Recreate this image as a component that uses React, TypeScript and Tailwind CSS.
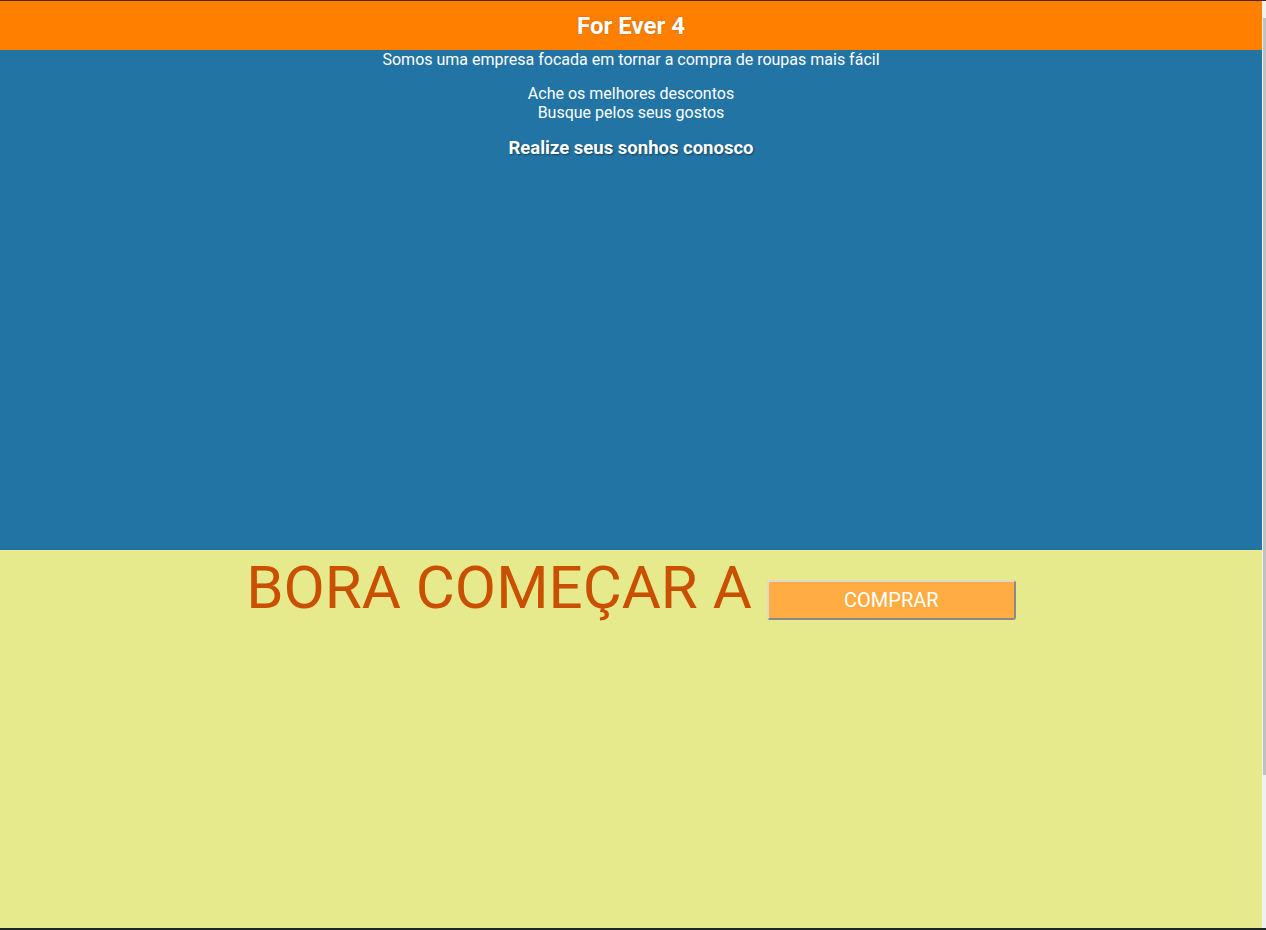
export default function App() {
  return (
    <div className="h-[930px] flex flex-col overflow-hidden font-['Roboto',sans-serif]">
      <div className="h-px bg-[#4a2500]" />
      <div className="flex flex-1 min-h-0">
        <main className="flex-1 flex flex-col">
          <header className="h-[49px] bg-[#ff8000] flex items-center justify-center">
            <h1 className="text-[24px] font-bold text-white [text-shadow:0_0_2px_rgba(0,0,0,0.25)]">
              For Ever 4
            </h1>
          </header>

          <section className="h-[500px] bg-[#2274a5] text-white text-center text-[16px]">
            <p className="leading-[19px]">
              Somos uma empresa focada em tornar a compra de roupas mais fácil
            </p>
            <p className="mt-[15px] leading-[19px]">
              Ache os melhores descontos
              <br />
              Busque pelos seus gostos
            </p>
            <h3 className="mt-[15px] text-[18.5px] font-bold leading-[22px] [text-shadow:1px_1px_2px_rgba(0,0,0,0.45)]">
              Realize seus sonhos conosco
            </h3>
          </section>

          <section className="flex-1 bg-[#e6ea8c] flex justify-center items-start">
            <span className="text-[60px] leading-[75px] text-[#c85000]">BORA COMEÇAR A</span>
            <button className="ml-[15px] mt-[30px] w-[249px] h-[40px] bg-[#ffad42] text-white text-[20px] border-2 border-t-[#e0d9c8] border-l-[#e0d9c8] border-r-[#8a8a8a] border-b-[#8a8a8a] rounded-[3px]">
              COMPRAR
            </button>
          </section>
        </main>
        <div className="relative w-[4px] bg-[#f1f1f1]">
          <div className="absolute left-[1px] right-0 top-[17px] h-[757px] bg-[#c1c1c1]" />
        </div>
      </div>
      <div className="h-[2px] bg-[#1b2727]" />
    </div>
  );
}
